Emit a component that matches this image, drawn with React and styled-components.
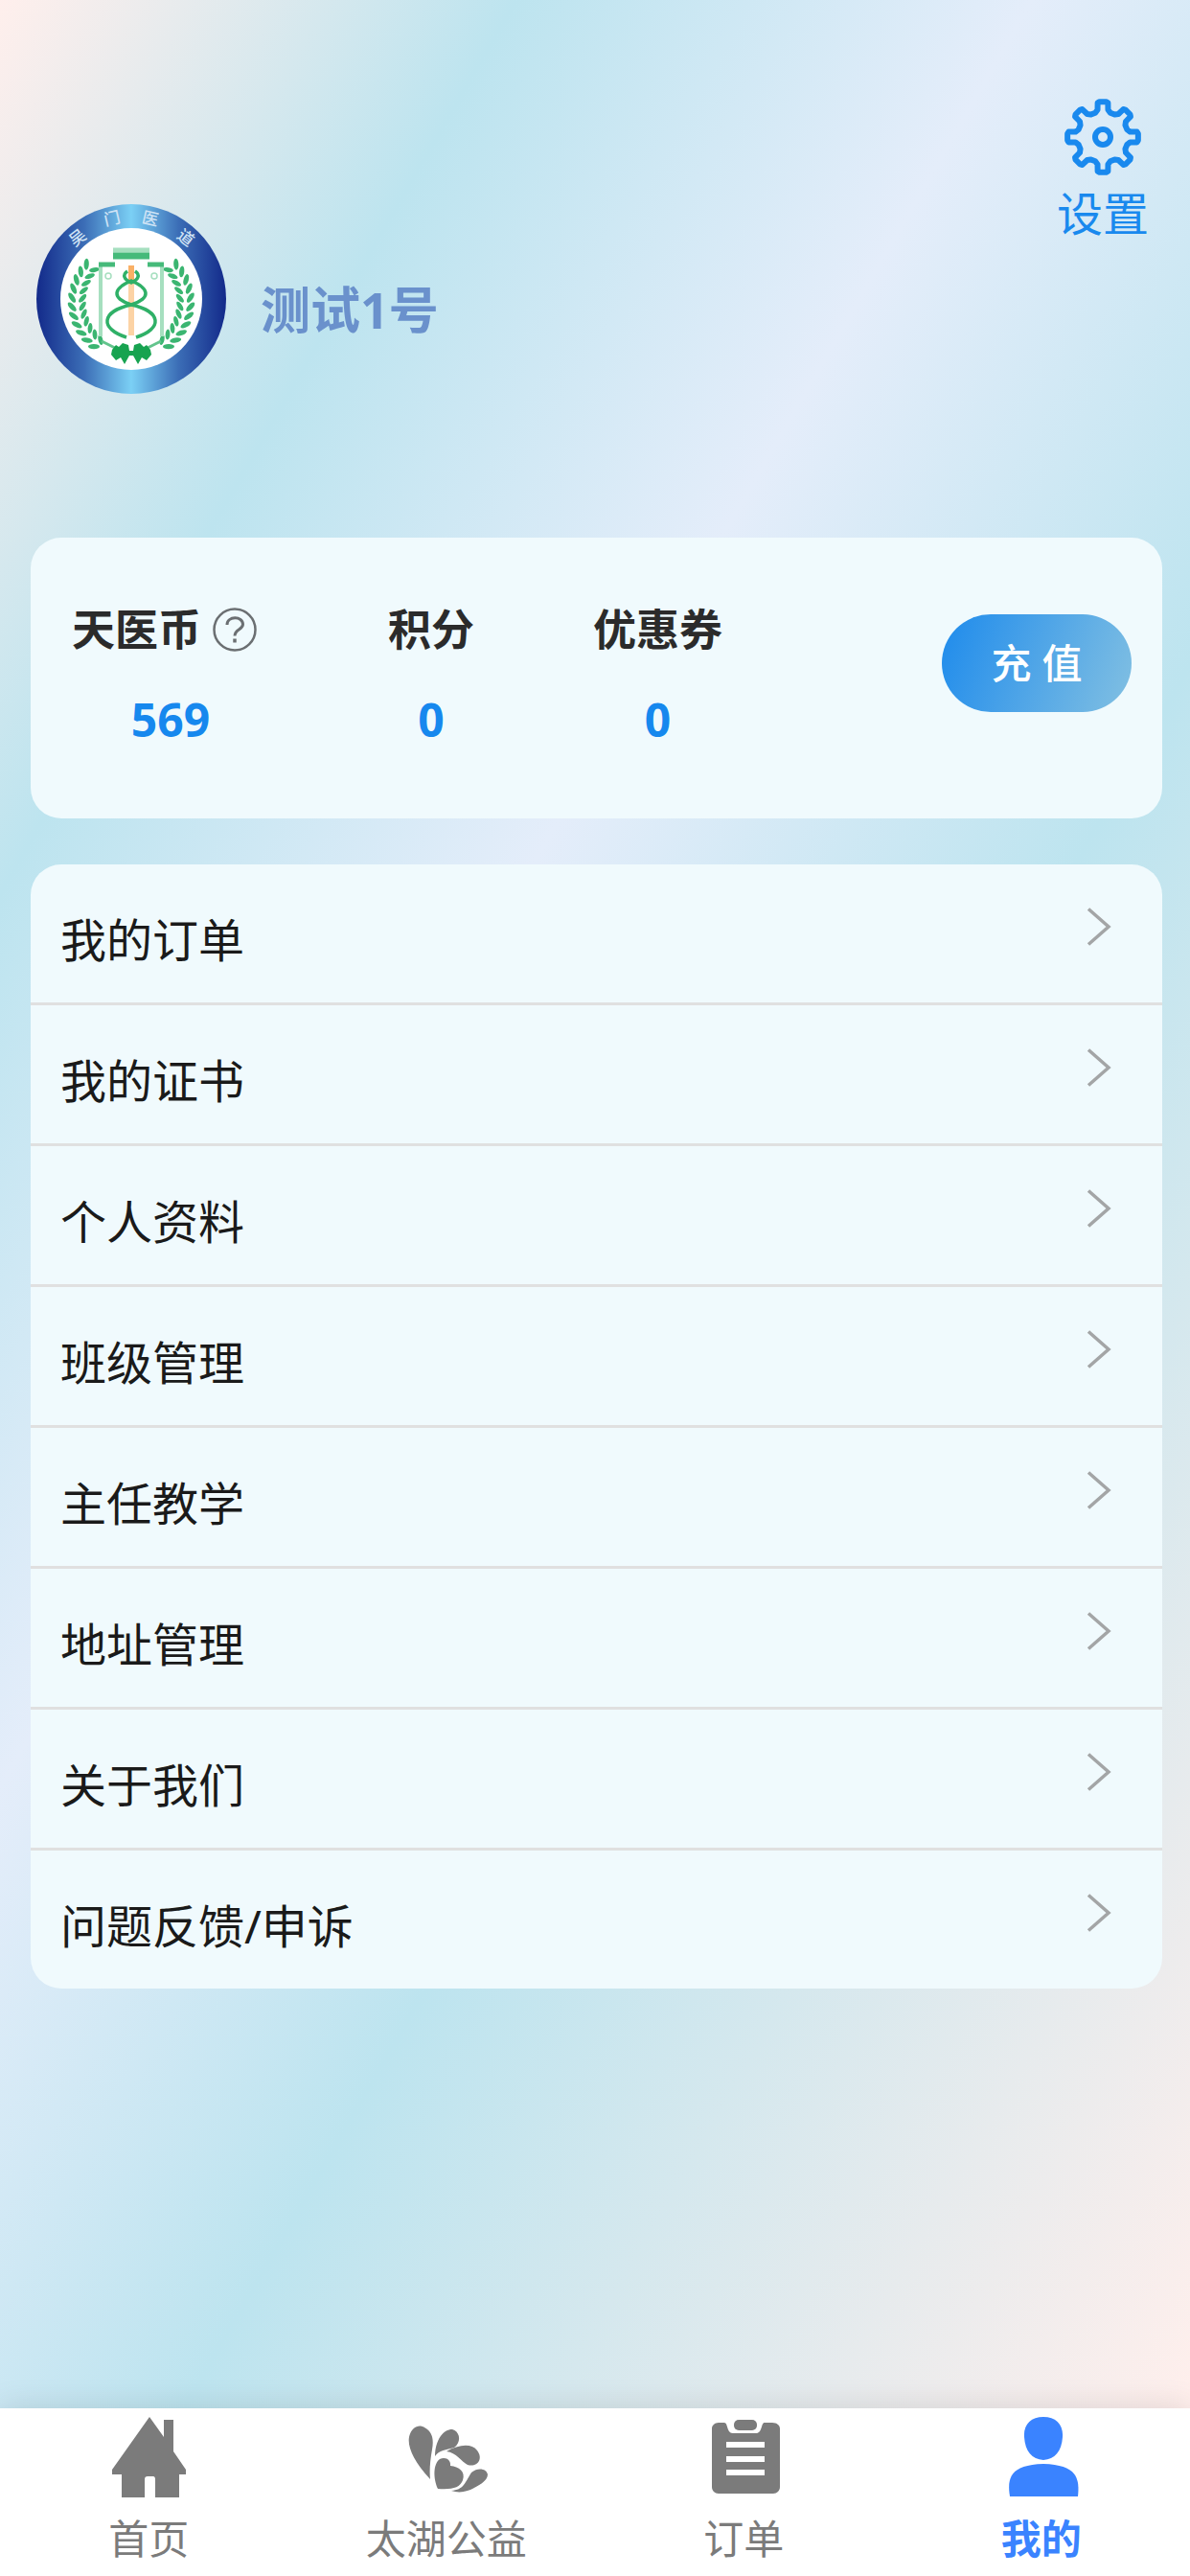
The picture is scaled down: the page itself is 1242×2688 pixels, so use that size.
import React from "react";
import styled, { createGlobalStyle, css } from "styled-components";

const GlobalStyle = createGlobalStyle`
  *, *::before, *::after { box-sizing: border-box; }
  body {
    margin: 0;
    font-family: "Noto Sans", "Noto Sans CJK SC", sans-serif;
    color: #1a1a1a;
  }
`;

const Page = styled.div`
  display: flex;
  flex-direction: column;
  min-height: 100vh;
`;

const Main = styled.main`
  flex: 1;
  display: flex;
  flex-direction: column;
  padding: 101px 29px 64px 32px;
  background: linear-gradient(
    120deg,
    #ffefec 0%,
    #bde4ef 20%,
    #e4edfa 40%,
    #bde4ef 61%,
    #ffefec 100%
  );
`;

const Header = styled.header`
  display: flex;
  justify-content: space-between;
  align-items: flex-start;
  margin-bottom: 150px;
`;

const Profile = styled.div`
  display: flex;
  align-items: center;
  gap: 36px;
  padding: 112px 0 0 6px;
`;

const Name = styled.h1`
  margin: 0;
  padding-top: 22px;
  font-size: 52px;
  line-height: 60px;
  font-weight: 700;
  color: #6a91cc;
`;

const Settings = styled.button`
  display: flex;
  flex-direction: column;
  align-items: center;
  gap: 8px;
  padding: 0 14px 0 0;
  border: 0;
  background: none;
  font: inherit;
  font-size: 48px;
  line-height: 60px;
  color: #1989ee;
  cursor: pointer;
`;

const panel = css`
  background: #f0fafd;
  border-radius: 32px;
`;

const Wallet = styled.section`
  ${panel}
  display: flex;
  justify-content: space-between;
  align-items: flex-start;
  margin-bottom: 48px;
  padding: 66px 32px 73px 43px;
`;

const Balances = styled.dl`
  display: flex;
  gap: 124px;
  margin: 0;
`;

const Balance = styled.div`
  display: flex;
  flex-direction: column;
  align-items: center;
  gap: 34px;
  min-width: ${(p) => (p.$wide ? "206px" : "0")};
`;

const BalanceName = styled.dt`
  display: flex;
  align-items: center;
  align-self: flex-start;
  gap: 12px;
  font-size: 45px;
  line-height: 60px;
  font-weight: 700;
  color: #2b2b2b;
`;

const BalanceValue = styled.dd`
  margin: 0;
  font-size: 48px;
  line-height: 60px;
  font-weight: 700;
  color: #1688ee;
`;

const HelpButton = styled.button`
  display: flex;
  padding: 0;
  border: 0;
  background: none;
  color: #6b6f72;
  cursor: pointer;
`;

const Recharge = styled.button`
  width: 198px;
  height: 102px;
  margin-top: 14px;
  padding: 0;
  border: 0;
  border-radius: 51px;
  background: linear-gradient(110deg, #1e8bec, #82c0e2);
  font: inherit;
  font-size: 42px;
  line-height: 60px;
  font-weight: 500;
  color: #fff;
  cursor: pointer;
`;

const Menu = styled.nav`
  ${panel}
  display: flex;
  flex-direction: column;
`;

const MenuItem = styled.a`
  display: flex;
  justify-content: space-between;
  align-items: flex-start;
  padding: 44px 53px 35px 31px;
  color: #1a1a1a;
  text-decoration: none;

  & + & {
    border-top: 3px solid #e0e0e0;
  }
`;

const MenuLabel = styled.span`
  padding-top: 5px;
  font-size: 48px;
  line-height: 60px;
`;

const TabBar = styled.nav`
  position: relative;
  display: grid;
  grid-template-columns: repeat(4, 1fr);
  padding-bottom: 9px;
  background: #fff;
  box-shadow: 0 0 32px rgba(0, 0, 0, 0.12);
`;

const Tab = styled.a`
  display: flex;
  flex-direction: column;
  align-items: center;
  gap: 12px;
  padding-top: 8px;
  font-size: 42px;
  line-height: 60px;
  font-weight: ${(p) => (p.$active ? 700 : 400)};
  color: ${(p) => (p.$active ? "#3a83ff" : "#7b7b7b")};
  text-decoration: none;
`;

/* Laurel leaves along the left arc of the emblem; the right side mirrors it. */
const leaves = Array.from({ length: 11 }, (_, i) => {
  const angle = 129 + i * 9.2;
  const rad = (angle * Math.PI) / 180;
  return { angle, cx: Math.cos(rad), cy: Math.sin(rad) };
});

const Laurel = () => (
  <g fill="#3bb571">
    {leaves.map(({ angle, cx, cy }) => (
      <g key={angle}>
        <ellipse
          cx={99 + cx * 62}
          cy={102 + cy * 60}
          rx="6"
          ry="2.600"
          transform={`rotate(${angle + 52} ${99 + cx * 62} ${102 + cy * 60})`}
        />
        <ellipse
          cx={99 + cx * 51}
          cy={102 + cy * 51}
          rx="5.500"
          ry="2.400"
          transform={`rotate(${angle + 128} ${99 + cx * 51} ${102 + cy * 51})`}
        />
      </g>
    ))}
  </g>
);

const ringText = [
  ["吴", 43, 35, -38],
  ["门", 79, 15, -13],
  ["医", 119, 15, 13],
  ["道", 156, 35, 38],
];

const Emblem = () => (
  <svg width="198" height="198" viewBox="0 0 198 198" role="img" aria-label="头像">
    <defs>
      <linearGradient id="ring">
        <stop offset="0" stopColor="#132a8a" />
        <stop offset="0.25" stopColor="#3b6db6" />
        <stop offset="0.5" stopColor="#7bd0f5" />
        <stop offset="0.75" stopColor="#3b6db6" />
        <stop offset="1" stopColor="#132a8a" />
      </linearGradient>
    </defs>
    <circle cx="99" cy="99" r="99" fill="url(#ring)" />
    <circle cx="99" cy="99" r="74" fill="#fff" />
    <g fill="#cfe3f5" fontSize="17" fontWeight="500" textAnchor="middle">
      {ringText.map(([ch, x, y, turn]) => (
        <text key={ch} x={x} y={y + 6} transform={`rotate(${turn} ${x} ${y})`}>
          {ch}
        </text>
      ))}
    </g>
    <Laurel />
    <g transform="matrix(-1 0 0 1 198 0)">
      <Laurel />
    </g>
    <g fill="none" stroke="#a6dfbf" strokeWidth="4">
      <path d="M67 64V138M131 138V64" />
      <path d="M80 48H118" strokeWidth="5" />
      <circle cx="75" cy="75" r="3" strokeWidth="1.500" />
      <circle cx="123" cy="75" r="3" strokeWidth="1.500" />
      <path d="M68 143L82 150M130 143L116 150" stroke="#62c48c" strokeWidth="3" />
    </g>
    <g fill="none" stroke="#45ba7a" strokeWidth="5">
      <path d="M65 63H82M116 63H133" />
      <path d="M80 54H118" strokeWidth="7" />
    </g>
    <path d="M99 66V137" stroke="#fcd3a5" strokeWidth="6" />
    <path d="M99 64V82" stroke="#f9b066" strokeWidth="6" />
    <g fill="none" stroke="#2fb067" strokeWidth="3.500">
      <path d="M95 70C89 74 92 79 99 82C106 79 109 74 103 70" />
      <path d="M99 80C80 88 78 98 99 105C120 98 118 88 99 80Z" />
      <path d="M94 139C66 130 67 112 99 105C131 112 132 130 104 139" />
    </g>
    <path
      d="M79 152L83 147L86 149L90 145L96 147L97 153H101L102 147L108 145L112 149L115 147L119 152L120 157L115 163L110 160L106 167L101 158H97L92 167L88 160L83 163L78 157Z"
      fill="#17a350"
    />
  </svg>
);

const gearPath = (() => {
  const pts = [];
  for (let i = 0; i < 8; i += 1) {
    const base = (i * 45 * Math.PI) / 180;
    [
      [-0.3, 26.5],
      [-0.19, 29],
      [-0.15, 36],
      [-0.09, 37],
      [0.09, 37],
      [0.15, 36],
      [0.19, 29],
      [0.3, 26.5],
    ].forEach(([d, r]) => {
      pts.push(
        `${(40 + r * Math.sin(base + d)).toFixed(2)} ${(40 - r * Math.cos(base + d)).toFixed(2)}`
      );
    });
  }
  return `M${pts.join("L")}Z`;
})();

const GearIcon = () => (
  <svg width="80" height="84" viewBox="0 -2 80 84" fill="none" stroke="currentColor" strokeWidth="6" strokeLinejoin="round" aria-hidden="true">
    <path d={gearPath} />
    <circle cx="40" cy="40" r="8" />
  </svg>
);

const HelpIcon = () => (
  <svg width="46" height="46" viewBox="0 0 46 46" fill="none" stroke="currentColor" aria-hidden="true">
    <circle cx="23" cy="23" r="21.500" strokeWidth="2.500" />
    <path d="M15 18C15 8.500 31.500 8.500 31.500 17.500C31.500 23 23 22.500 23 29.500" strokeWidth="3" />
    <path d="M23 32.500V36.500" strokeWidth="3.500" />
  </svg>
);

const Chevron = () => (
  <svg width="26" height="42" viewBox="0 0 26 42" fill="none" stroke="#a3a5a6" strokeWidth="3.500" aria-hidden="true">
    <path d="M2 2.500L23 21L2 39.500" />
  </svg>
);

const HomeIcon = () => (
  <svg width="84" height="86" viewBox="0 0 84 86" fill="currentColor" aria-hidden="true">
    <path d="M43 1L58 22V4H68V37L81 56V61H74V85H49V66C49 64 48 63 47 63H41C39 63 38 64 38 66V85H14V61H4V56Z" />
  </svg>
);

const CharityIcon = () => (
  <svg width="86" height="86" viewBox="0 0 86 86" fill="currentColor" aria-hidden="true">
    <path d="M26 66C9 48 2 32 4 22C6 12 14 8 20 12C28 16 30 24 28 35C26 46 25 57 26 66Z" />
    <path d="M31 42C31 26 39 14 49 14C57 16 59 27 51 33C43 35 35 36 31 42Z" />
    <path d="M43 37C55 30 69 28 75 36C82 45 75 54 65 51C59 48 53 38 43 37Z" />
    <path d="M34 76C29 65 29 50 36 45C42 42 48 46 47 52C56 53 63 58 60 67C57 75 49 77 34 76Z" />
    <path d="M48 78C61 77 62 70 69 59C76 53 85 55 86 61C86 68 76 73 68 77C60 80 54 80 48 78Z" />
  </svg>
);

const OrderIcon = () => (
  <svg width="84" height="86" viewBox="-2 0 84 86" aria-hidden="true">
    <path
      d="M14 7H20C24 7 22 18 29 18H53C60 18 58 7 62 7H70C75 7 78 10 78 13V74C78 78 75 81 71 81H14C10 81 7 78 7 74V13C7 10 10 7 14 7Z"
      fill="currentColor"
    />
    <rect x="30" y="4" width="24" height="11" rx="5" fill="currentColor" />
    <path d="M22 30H62M22 45H62M22 59H62" stroke="#fff" strokeWidth="6" />
  </svg>
);

const PersonIcon = () => (
  <svg width="84" height="86" viewBox="-2 0 84 86" fill="currentColor" aria-hidden="true">
    <path d="M42 1C55 1 63 9 62 22C61 37 54 45 42 46C30 45 23 37 22 22C21 9 29 1 42 1Z" />
    <path d="M7 84C4 65 7 51 42 50C77 51 80 65 78 84Z" />
  </svg>
);

const menuItems = [
  "我的订单",
  "我的证书",
  "个人资料",
  "班级管理",
  "主任教学",
  "地址管理",
  "关于我们",
  "问题反馈/申诉",
];

const tabs = [
  { label: "首页", Icon: HomeIcon },
  { label: "太湖公益", Icon: CharityIcon },
  { label: "订单", Icon: OrderIcon },
  { label: "我的", Icon: PersonIcon, active: true },
];

export default function App() {
  return (
    <Page lang="zh-CN">
      <GlobalStyle />
      <Main>
        <Header>
          <Profile>
            <Emblem />
            <Name>测试1号</Name>
          </Profile>
          <Settings type="button">
            <GearIcon />
            设置
          </Settings>
        </Header>
        <Wallet>
          <Balances>
            <Balance $wide>
              <BalanceName>
                天医币
                <HelpButton type="button" aria-label="天医币说明">
                  <HelpIcon />
                </HelpButton>
              </BalanceName>
              <BalanceValue>569</BalanceValue>
            </Balance>
            <Balance>
              <BalanceName>积分</BalanceName>
              <BalanceValue>0</BalanceValue>
            </Balance>
            <Balance>
              <BalanceName>优惠券</BalanceName>
              <BalanceValue>0</BalanceValue>
            </Balance>
          </Balances>
          <Recharge type="button">充 值</Recharge>
        </Wallet>
        <Menu>
          {menuItems.map((label) => (
            <MenuItem key={label} href="#">
              <MenuLabel>{label}</MenuLabel>
              <Chevron />
            </MenuItem>
          ))}
        </Menu>
      </Main>
      <TabBar>
        {tabs.map(({ label, Icon, active }) => (
          <Tab key={label} href="#" $active={active} aria-current={active ? "page" : undefined}>
            <Icon />
            {label}
          </Tab>
        ))}
      </TabBar>
    </Page>
  );
}
